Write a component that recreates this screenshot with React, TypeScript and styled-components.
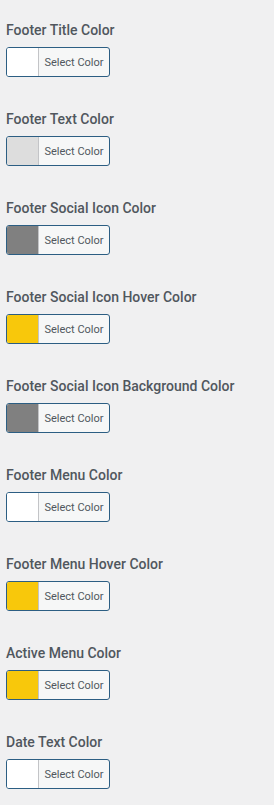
import styled, { createGlobalStyle } from 'styled-components'

const GlobalStyle = createGlobalStyle`
  html, body {
    margin: 0;
    padding: 0;
    background: #f0f0f1;
  }
`

const Panel = styled.div`
  width: 274px;
  min-height: 805px;
  box-sizing: border-box;
  padding: 21px 6px 0;
  background: #f0f0f1;
  font-family: Roboto, "Liberation Sans", sans-serif;
  display: flex;
  flex-direction: column;
  gap: 33px;
`

const Control = styled.div`
  display: flex;
  flex-direction: column;
  align-items: flex-start;
  gap: 8px;
`

const Title = styled.span`
  font-size: 14px;
  line-height: 18px;
  font-weight: 500;
  color: #50575e;
`

const PickerButton = styled.button`
  display: flex;
  align-items: stretch;
  height: 30px;
  width: 104px;
  padding: 0;
  box-sizing: border-box;
  border: 1px solid #2c5e83;
  border-radius: 3px;
  background: #f6f7f7;
  overflow: hidden;
  cursor: pointer;
`

const Swatch = styled.span<{ $color: string }>`
  width: 31px;
  flex: none;
  background: ${(props) => props.$color};
  border-right: 1px solid #c3c4c7;
`

const Label = styled.span`
  flex: 1;
  display: flex;
  align-items: center;
  justify-content: center;
  font-family: Roboto, "Liberation Sans", sans-serif;
  font-size: 11px;
  color: #50575e;
`

const config = [
  { title: 'Footer Title Color', color: '#ffffff' },
  { title: 'Footer Text Color', color: '#dddddd' },
  { title: 'Footer Social Icon Color', color: '#808080' },
  { title: 'Footer Social Icon Hover Color', color: '#f8c80b' },
  { title: 'Footer Social Icon Background Color', color: '#808080' },
  { title: 'Footer Menu Color', color: '#ffffff' },
  { title: 'Footer Menu Hover Color', color: '#f8c80b' },
  { title: 'Active Menu Color', color: '#f8c80b' },
  { title: 'Date Text Color', color: '#ffffff' },
]

const App = () => {
  return (
    <>
      <GlobalStyle />
      <Panel>
        {config.map(({ title, color }) => (
          <Control key={title}>
            <Title>{title}</Title>
            <PickerButton type="button">
              <Swatch $color={color} />
              <Label>Select Color</Label>
            </PickerButton>
          </Control>
        ))}
      </Panel>
    </>
  )
}

export default App
